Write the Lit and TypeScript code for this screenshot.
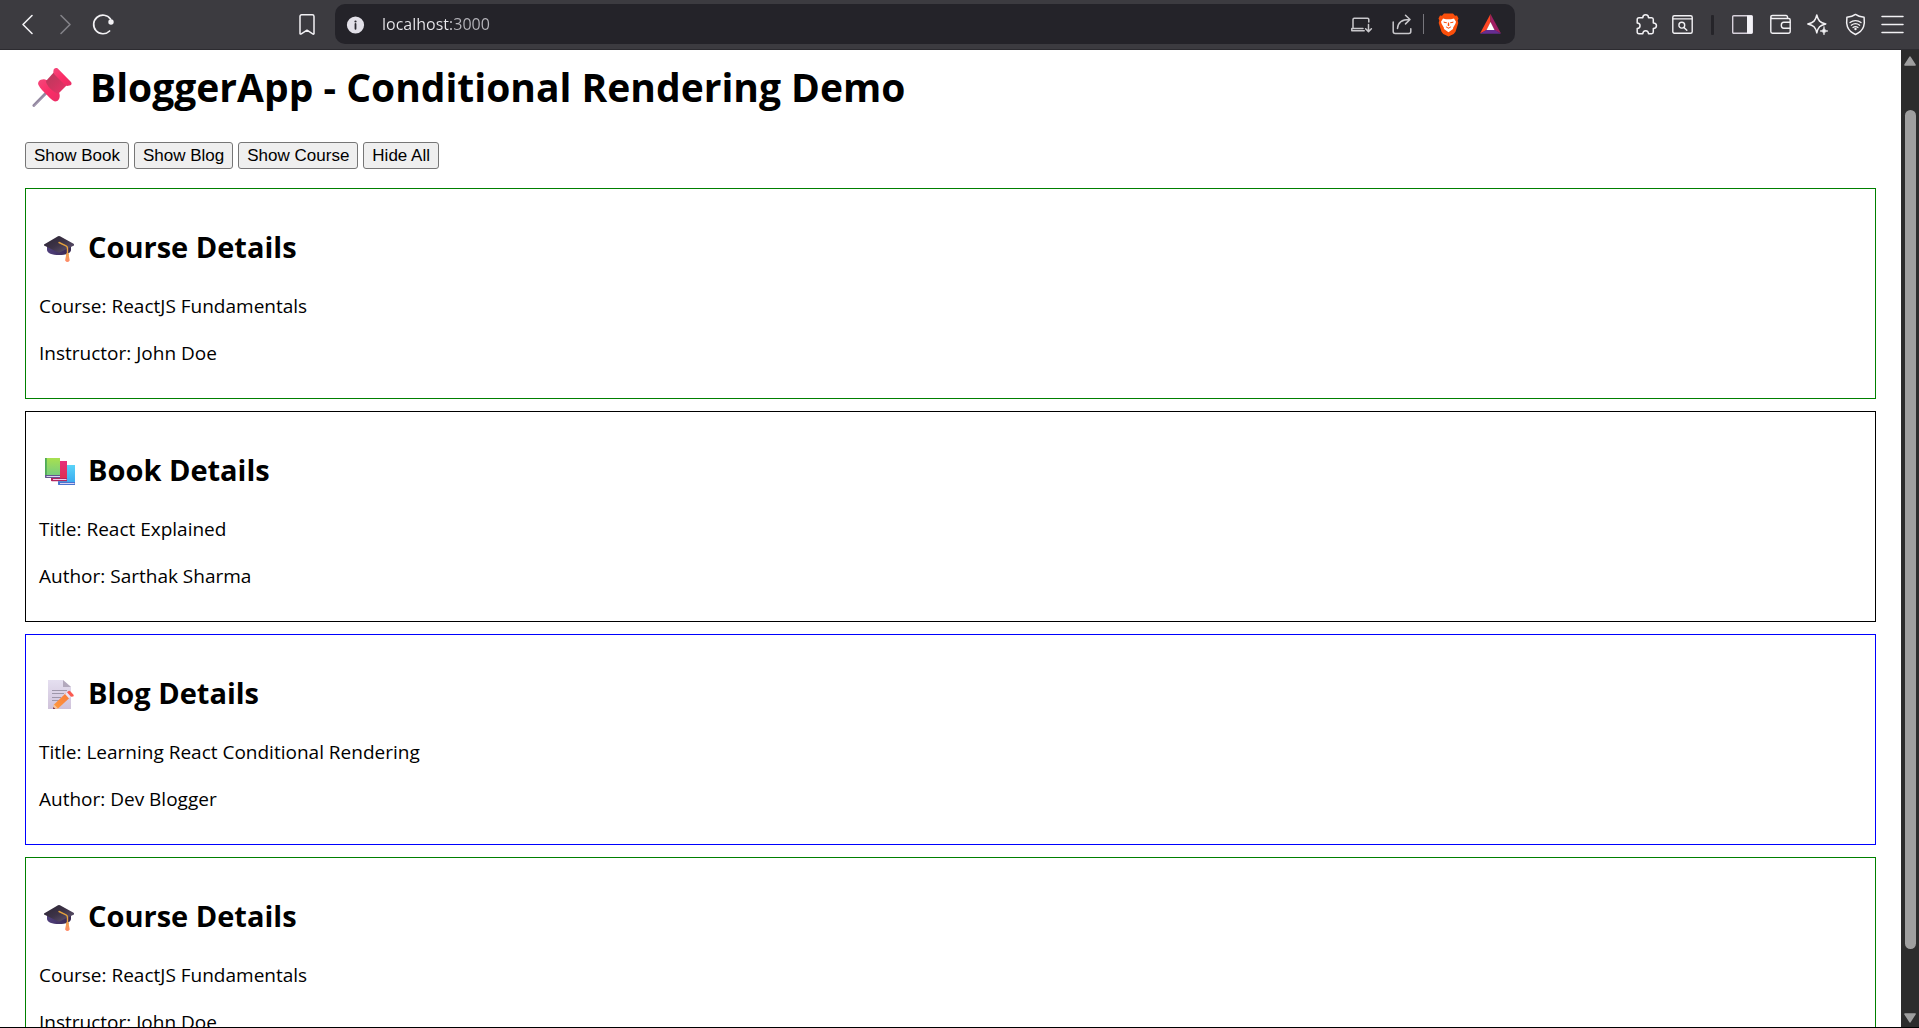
import { LitElement, html, css, svg, nothing } from "lit";
import { customElement, property, state } from "lit/decorators.js";

type Kind = "course" | "book" | "blog";

const details: Record<Kind, { heading: string; lines: string[] }> = {
  course: {
    heading: "Course Details",
    lines: ["Course: ReactJS Fundamentals", "Instructor: John Doe"],
  },
  book: {
    heading: "Book Details",
    lines: ["Title: React Explained", "Author: Sarthak Sharma"],
  },
  blog: {
    heading: "Blog Details",
    lines: ["Title: Learning React Conditional Rendering", "Author: Dev Blogger"],
  },
};

const capArt = svg`
  <defs>
    <linearGradient id="cap-top" x1="0" y1="0" x2="1" y2="1">
      <stop offset="0" stop-color="#2c2534"></stop><stop offset="0.5" stop-color="#3d3347"></stop><stop offset="1" stop-color="#665a78"></stop>
    </linearGradient>
    <linearGradient id="cap-base" x1="0" y1="0" x2="1" y2="0">
      <stop offset="0" stop-color="#50407c"></stop><stop offset="1" stop-color="#37264f"></stop>
    </linearGradient>
    <linearGradient id="cap-tassel" x1="0" y1="0" x2="0" y2="1">
      <stop offset="0" stop-color="#f2a14c"></stop><stop offset="1" stop-color="#ff8a6c"></stop>
    </linearGradient>
  </defs>
  <path d="M9 18v6c0 3 5 5 12 5s12-2 12-5v-6z" fill="url(#cap-base)"></path>
  <path d="M6 18.500L20 10.300q1-.5 2 0L36 18v1.500L22 26.300q-1 .5-2 0L6 19.500z" fill="url(#cap-top)"></path>
  <path d="M21 16.500l7 3.300q1.500.8 1.500 2.500v6" fill="none" stroke="#e3a03d" stroke-width="1.400" stroke-linecap="round"></path>
  <path d="M28.300 28h2.200l1.200 6.500q-2.300 3-4.600 0z" fill="url(#cap-tassel)"></path>
  <circle cx="29.400" cy="28.500" r="1.500" fill="#f0a050"></circle>`;

const booksArt = svg`
  <defs>
    <linearGradient id="bk-green" x1="0" y1="0" x2="0" y2="1"><stop offset="0" stop-color="#a8e04f"></stop><stop offset="1" stop-color="#6fca86"></stop></linearGradient>
    <linearGradient id="bk-red" x1="0" y1="0" x2="0" y2="1"><stop offset="0" stop-color="#e62f7c"></stop><stop offset="1" stop-color="#db2f4b"></stop></linearGradient>
    <linearGradient id="bk-blue" x1="0" y1="0" x2="0" y2="1"><stop offset="0" stop-color="#5ad3f8"></stop><stop offset="1" stop-color="#36a5ee"></stop></linearGradient>
  </defs>
  <path d="M20 16h17v20H21q-1 0-1-1z" fill="url(#bk-blue)"></path>
  <path d="M20 33h17v3H21q-1 0-1-1z" fill="#4a74cf"></path><path d="M22 34h14.500v1H22z" fill="#d9d3f3"></path>
  <path d="M13 12h16v20H14q-1 0-1-1z" fill="url(#bk-red)"></path>
  <path d="M13 29h16v3.200H14q-1 0-1-1z" fill="#b32561"></path><path d="M15 30h13.500v1H15z" fill="#edcfe8"></path>
  <path d="M7 9h15v20H8q-1 0-1-1z" fill="url(#bk-green)"></path><path d="M7 9h1.800v18H7z" fill="#4faa58"></path>
  <path d="M7 26h15v3H8q-1 0-1-1z" fill="#63558f"></path><path d="M8.500 27h13.500v1H8.500z" fill="#dcd6f1"></path>`;

const memoArt = svg`
  <defs>
    <linearGradient id="mm-page" x1="0" y1="0" x2="0" y2="1"><stop offset="0" stop-color="#e5dff0"></stop><stop offset="1" stop-color="#cfc2da"></stop></linearGradient>
    <linearGradient id="mm-pen" x1="1" y1="0" x2="0" y2="1"><stop offset="0" stop-color="#f77a3d"></stop><stop offset="1" stop-color="#ff9a3c"></stop></linearGradient>
  </defs>
  <path d="M10 8h15l8 7v22H10z" fill="url(#mm-page)"></path>
  <path d="M25 8l8 7h-8z" fill="#b3a9bd"></path>
  <path d="M14 18.500h15M14 21.500h12M14 25.500h9M14 28.500h7" stroke="#9e97aa" stroke-width="1" fill="none"></path>
  <path d="M16 32.500l12-11.500 4 4.500L20 36.500l-4.500.5z" fill="url(#mm-pen)"></path>
  <path d="M16 32.500l4 4-5 .5z" fill="#f5c6a2"></path><path d="M15.500 35l1.800 1.900-2.300.1z" fill="#6b2b4d"></path>
  <path d="M27 22l2-1.700 4 4.500-2 1.700z" fill="#ebe4f3"></path>
  <path d="M29 20.300l1.600-1.300q1-.6 1.700.2l3.200 3.500q.6 1-.2 1.700L33 24.800z" fill="#fb5a50"></path>`;

const pinArt = svg`
  <defs>
    <linearGradient id="pin-body" x1="0" y1="0" x2="1" y2="1"><stop offset="0" stop-color="#b53a5c"></stop><stop offset="0.5" stop-color="#cf3560"></stop><stop offset="1" stop-color="#f0306a"></stop></linearGradient>
    <linearGradient id="pin-rim" x1="0" y1="0" x2="1" y2="1"><stop offset="0" stop-color="#f4487b"></stop><stop offset="0.5" stop-color="#fb2d67"></stop><stop offset="1" stop-color="#e92d65"></stop></linearGradient>
  </defs>
  <path d="M22 33L8.800 46.500" stroke="#9388a0" stroke-width="2.800" stroke-linecap="round"></path>
  <path d="M23 34L9 47.500" stroke="#b9b0c4" stroke-width="1"></path>
  <path d="M13.500 26c-1.500-3 2-6.500 6.500-5.500 6 1.300 13 8 14.500 14.500.9 4-1 7.500-4.500 7.500-3-1-5-3.500-8-6.500-3.500-3.300-7-6.500-8.500-10z" fill="url(#pin-rim)"></path>
  <path d="M21 22l9-10 13 13-9.500 9.500c-3 .5-13-8-12.500-12.500z" fill="url(#pin-body)"></path>
  <path d="M28.500 11.500c0-2 2-3.200 4-2.200L46 23c1.300 2 .2 3.600-2 3.600-1.500.8-3.300 0-5-1.600l-9-9c-1.300-1.300-2-3-1.500-4.500z" fill="url(#pin-rim)"></path>`;

const art = { course: capArt, book: booksArt, blog: memoArt };

const glyphs = {
  back: svg`<path d="M15 1.500L6 10.500l9 9" stroke-width="1.600"></path>`,
  forward: svg`<path d="M6 1.500l9 9-9 9" stroke-width="1.600" stroke="#838287"></path>`,
  reload: svg`<path d="M16.600 17A9.300 9.300 0 1 1 17.500 5" stroke-width="1.700"></path><circle cx="18" cy="8" r="2.700" fill="#f2f1f4" stroke="none"></circle>`,
  bookmark: svg`<path d="M3 2.500q0-1.700 1.700-1.700h10.600q1.700 0 1.700 1.700v17.200q-.6.700-1.300.2L10 16.200l-5.700 3.700q-.9.400-1.300-.3z" stroke-width="1.500"></path>`,
  device: svg`<path d="M17.800 8V5.500q0-1.200-1.200-1.200H3.200Q2 4.300 2 5.500v9h10M.8 16.800h12.400M.8 14.500v2.300" stroke-width="1.500"></path><path d="M17.500 10.500v6.800M14.600 14.700l2.900 2.900 2.900-2.900" stroke-width="1.500"></path>`,
  share: svg`<path d="M1.200 8v9.500q0 2 2 2h13.600q2 0 2-2v-2.800" stroke-width="1.500"></path><path d="M5.500 14.500c.3-5.300 3.700-9 12-9M13.500 1.300l4.500 4.200-4.500 4.400" stroke-width="1.500"></path>`,
  puzzle: svg`<path d="M1.200 5.500q0-1.800 1.800-1.800h3.800c0-3.900 5.700-3.900 5.700 0h3.200q1.600 0 1.600 1.800v3.400c4.200.2 4.200 5.300 0 5.600v3.600q0 1.700-1.600 1.700h-3.200c-.2-4.200-5.500-4.200-5.700 0H3q-1.800 0-1.800-1.700v-3.600c3.800-.4 3.800-5.400 0-5.600z" stroke-width="1.500"></path>`,
  find: svg`<rect x="0.800" y="1.800" width="19.400" height="17.400" rx="1.500" stroke-width="1.400"></rect><path d="M1 4.800h19" stroke-width="1.200"></path><circle cx="9.800" cy="11.200" r="2.900" stroke-width="1.400"></circle><path d="M12 13.500l2.800 2.800" stroke-width="1.400"></path>`,
  panel: svg`<rect x="0.700" y="1.700" width="19.600" height="17.600" rx="1" stroke-width="1.400" stroke="#d6d0da"></rect><path d="M15 1.500h4.500q1 0 1 1v16q0 1-1 1H15z" fill="#f4f3f7" stroke="none"></path>`,
  wallet: svg`<path d="M17.500 4V3q0-1.500-1.500-1.500H2.500Q.8 1.500.8 3v14.500q0 1.700 1.700 1.700h15.800q1.900 0 1.900-1.700V6q0-1.500-1.500-1.500H2.500Q.8 4.500.8 3" stroke-width="1.400"></path><path d="M20 8.200h-6.200q-2.500 0-2.500 3t2.500 3H20" stroke-width="1.400"></path>`,
  sparkle: svg`<path d="M9.800.9c1.400 6 3 7.600 9 9-6 1.400-7.600 3-9 9-1.400-6-3-7.600-9-9 6-1.400 7.600-3 9-9z" stroke-width="1.500"></path><path d="M17 12.800c.6 3 1 3.600 4 4.200-3 .6-3.400 1-4 4-.6-3-1-3.400-4-4 3-.6 3.400-1.200 4-4.200z" fill="#f2f1f4" stroke-width="0.600"></path>`,
  vpn: svg`<path d="M10.500.4c2.800 2 5.500 2.500 8.600 2.900.8 6.500.6 13.200-8.600 17.200C1.300 16.500 1.100 9.800 1.900 3.300 5 2.900 7.700 2.400 10.500.4z" stroke-width="1.500"></path><path d="M5 8.600c3.200-2.600 7.800-2.600 11 0M6.300 11.200c2.600-2 5.800-2 8.400 0M8 13.500c1.600-1.100 3.400-1.100 5 0" stroke-width="1.300"></path><circle cx="10.500" cy="15" r="1.200" fill="#f2f1f4" stroke="none"></circle>`,
  menu: svg`<path d="M0 2.500h21M0 10.500h21M0 18.500h21" stroke-width="1.500"></path>`,
  info: svg`<circle cx="10.500" cy="11" r="8.600" fill="#e2e0e8" stroke="none"></circle><path d="M10.500 10v4.800" stroke="#2a2930" stroke-width="1.800"></path><circle cx="10.500" cy="7.500" r="1.100" fill="#2a2930" stroke="none"></circle>`,
  lion: svg`<path d="M6-.5h9l2 2.200 2-.2 1.500 3-.8 2 .6 2.500-2.800 8.800-1.800 2.200-5.200 2.500-5.200-2.500-1.800-2.200L.7 9 1.300 6.500l-.8-2L2 1.500l2 .2z" fill="#fb4f0b" stroke="none"></path><path d="M5 4.500l3 .7h5l3-.7 2 3.200-.6 2-1 1.800-1.200 2-.2 1.600-4.500 3.200-4.500-3.200-.2-1.600-1.200-2-1-1.800-.6-2z" fill="#fff" stroke="none"></path><path d="M5.500 7.400l3.600 1-.5.900-2.800-.6zM15.500 7.400l-3.600 1 .5.900 2.800-.6zM10 8.500h1l.4 3 -.9.800-.9-.8zM7.800 12.200l2.700 1.500 2.700-1.500-.5 1.300-2.200 1.300-2.200-1.300z" fill="#fb4f0b" stroke="none"></path>`,
  bat: svg`<path d="M10.500 0L0 19.500l6.500-3.300 4-8z" fill="#ff4724" stroke="none"></path><path d="M10.500 0L21 19.500l-6.500-3.300-4-8z" fill="#9e1f63" stroke="none"></path><path d="M0 19.800h21l-6.500-4h-8z" fill="#662d91" stroke="none"></path><path d="M10.500 8l4 7.900h-8z" fill="#fff" stroke="none"></path>`,
};

@customElement("chrome-icon")
class ChromeIcon extends LitElement {
  @property() name: keyof typeof glyphs = "menu";
  @property() label = "";

  static styles = css`
    :host { display: block; }
    .icon-button {
      display: block;
      padding: 0;
      border: 0;
      background: none;
      color: #f2f1f4;
      cursor: pointer;
    }
    .glyph { display: block; width: 21px; height: 21px; overflow: visible; }
  `;

  render() {
    return html`<button class="icon-button" type="button" aria-label=${this.label}>
      <svg class="glyph" viewBox="0 0 21 21" fill="none" stroke="currentColor" stroke-linecap="round" stroke-linejoin="round" aria-hidden="true">${glyphs[this.name]}</svg>
    </button>`;
  }
}

@customElement("browser-toolbar")
class BrowserToolbar extends LitElement {
  static styles = css`
    :host { display: block; }
    .toolbar {
      display: grid;
      grid-template-columns: 335px minmax(0, 1fr) 404px;
      align-items: center;
      height: 49px;
      background: #3c3b40;
      border-bottom: 1px solid #2c2b30;
    }
    .nav { display: flex; align-items: center; gap: 17px; padding: 0 17px; }
    .nav .save { margin-left: auto; }
    .address {
      display: flex;
      align-items: center;
      align-self: start;
      height: 40px;
      margin-top: 4px;
      padding: 0 14px 0 10px;
      border-radius: 10px;
      background: #242329;
    }
    .url {
      flex: 1;
      min-width: 0;
      margin: 0 16px;
      padding: 0;
      border: 0;
      outline: none;
      font: 16px/24px "Open Sans", "Noto Sans", sans-serif;
      color: transparent;
      background: linear-gradient(90deg, #e9e8ec 69px, #b7b6bc 69px);
      -webkit-background-clip: text;
      background-clip: text;
    }
    .address-tools { display: flex; align-items: center; }
    .divider { width: 1px; height: 20px; background: #77767c; margin: 0 14px 0 10px; }
    .soft { opacity: 0.8; }
    .soft + .soft { margin-left: 20px; }
    .bat { margin-left: 21px; }
    .tools { display: flex; align-items: center; justify-content: flex-end; padding-right: 16px; }
    .tools .find { margin-left: 15px; }
    .bar { width: 3px; height: 20px; margin: 0 18px; border-radius: 1px; background: #252429; }
    .panel-tools { display: flex; justify-content: space-between; width: 171px; }
  `;

  render() {
    return html`
      <header class="toolbar">
        <nav class="nav" aria-label="Navigation">
          <chrome-icon name="back" label="Back"></chrome-icon>
          <chrome-icon name="forward" label="Forward"></chrome-icon>
          <chrome-icon name="reload" label="Reload"></chrome-icon>
          <chrome-icon class="save" name="bookmark" label="Bookmark"></chrome-icon>
        </nav>
        <div class="address">
          <chrome-icon name="info" label="Site information"></chrome-icon>
          <input class="url" type="text" aria-label="Address" .value=${"localhost:3000"} spellcheck="false" />
          <div class="address-tools">
            <chrome-icon class="soft" name="device" label="Send to device"></chrome-icon>
            <chrome-icon class="soft" name="share" label="Share"></chrome-icon>
            <span class="divider"></span>
            <chrome-icon name="lion" label="Shields"></chrome-icon>
            <chrome-icon class="bat" name="bat" label="Rewards"></chrome-icon>
          </div>
        </div>
        <div class="tools">
          <chrome-icon name="puzzle" label="Extensions"></chrome-icon>
          <chrome-icon class="find" name="find" label="Search tabs"></chrome-icon>
          <span class="bar"></span>
          <div class="panel-tools">
            <chrome-icon name="panel" label="Sidebar"></chrome-icon>
            <chrome-icon name="wallet" label="Wallet"></chrome-icon>
            <chrome-icon name="sparkle" label="Assistant"></chrome-icon>
            <chrome-icon name="vpn" label="VPN"></chrome-icon>
            <chrome-icon name="menu" label="Menu"></chrome-icon>
          </div>
        </div>
      </header>
    `;
  }
}

@customElement("detail-card")
class DetailCard extends LitElement {
  @property() kind: Kind = "course";

  static styles = css`
    :host { display: block; }
    .card { padding: 37px 13px 31px; border: 1px solid #000; }
    .course { border-color: #008000; }
    .blog { border-color: #0000ff; }
    .heading {
      display: flex;
      align-items: flex-start;
      gap: 9px;
      margin: 0 0 25px;
      font-size: 29px;
      line-height: 42px;
      font-weight: 700;
    }
    .art { display: block; width: 40px; height: 40px; }
    .line { margin: 0; line-height: 27px; }
    .line + .line { margin-top: 20px; }
  `;

  render() {
    const { heading, lines } = details[this.kind];
    return html`
      <section class="card ${this.kind}">
        <h2 class="heading">
          <svg class="art" viewBox="1 0 40 40" aria-hidden="true">${art[this.kind]}</svg>${heading}
        </h2>
        ${lines.map((line) => html`<p class="line">${line}</p>`)}
      </section>
    `;
  }
}

@customElement("app-root")
class AppRoot extends LitElement {
  @state() private selected: Kind | null = "course";

  static styles = css`
    :host {
      display: flex;
      flex-direction: column;
      box-sizing: border-box;
      height: 100vh;
      border-bottom: 1px solid #000;
      background: #fff;
      color: #000;
      font-family: "Open Sans", "Noto Sans", sans-serif;
      font-size: 19px;
    }
    .viewport { flex: 1; display: flex; min-height: 0; }
    .page { flex: 1; min-width: 0; overflow: hidden; padding: 9px 25px 0; }
    .title {
      display: flex;
      align-items: flex-start;
      gap: 10px;
      margin: 0 0 28px;
      font-size: 39px;
      line-height: 55px;
      font-weight: 700;
    }
    .pin { display: block; width: 55px; height: 53px; }
    .actions { display: flex; gap: 5px; margin-bottom: 19px; }
    .action {
      height: 27px;
      padding: 0 8px;
      border: 1px solid #767676;
      border-radius: 3px;
      background: #efefef;
      color: #000;
      font: 17px/24px "Liberation Sans", Arial, sans-serif;
    }
    .cards { display: flex; flex-direction: column; gap: 12px; }
    .scrollbar {
      display: flex;
      flex-direction: column;
      align-items: center;
      box-sizing: border-box;
      width: 18px;
      padding: 6px 0 4px;
      background: #2c2c2c;
    }
    .arrow { display: block; width: 12px; height: 10px; }
    .track { flex: 1; display: flex; flex-direction: column; width: 11px; }
    .before { flex: 44; }
    .thumb { flex: 839; border-radius: 6px; background: #9f9f9f; }
    .after { flex: 64; }
  `;

  private show(kind: Kind | null) {
    this.selected = kind;
  }

  render() {
    return html`
      <browser-toolbar></browser-toolbar>
      <div class="viewport">
        <main class="page">
          <h1 class="title">
            <svg class="pin" viewBox="0 0 55 53" fill="none" aria-hidden="true">${pinArt}</svg>BloggerApp - Conditional Rendering Demo
          </h1>
          <div class="actions">
            <button class="action" type="button" @click=${() => this.show("book")}>Show Book</button>
            <button class="action" type="button" @click=${() => this.show("blog")}>Show Blog</button>
            <button class="action" type="button" @click=${() => this.show("course")}>Show Course</button>
            <button class="action" type="button" @click=${() => this.show(null)}>Hide All</button>
          </div>
          <div class="cards">
            ${this.selected ? html`<detail-card kind=${this.selected}></detail-card>` : nothing}
            <detail-card kind="book"></detail-card>
            <detail-card kind="blog"></detail-card>
            <detail-card kind="course"></detail-card>
          </div>
        </main>
        <div class="scrollbar" aria-hidden="true">
          <svg class="arrow" viewBox="0 0 12 10"><path d="M6 1.200L11 9H1z" fill="#9f9f9f" stroke="#9f9f9f" stroke-width="1.600" stroke-linejoin="round"></path></svg>
          <div class="track"><div class="before"></div><div class="thumb"></div><div class="after"></div></div>
          <svg class="arrow" viewBox="0 0 12 10"><path d="M6 8.800L11 1H1z" fill="#9f9f9f" stroke="#9f9f9f" stroke-width="1.600" stroke-linejoin="round"></path></svg>
        </div>
      </div>
    `;
  }
}
